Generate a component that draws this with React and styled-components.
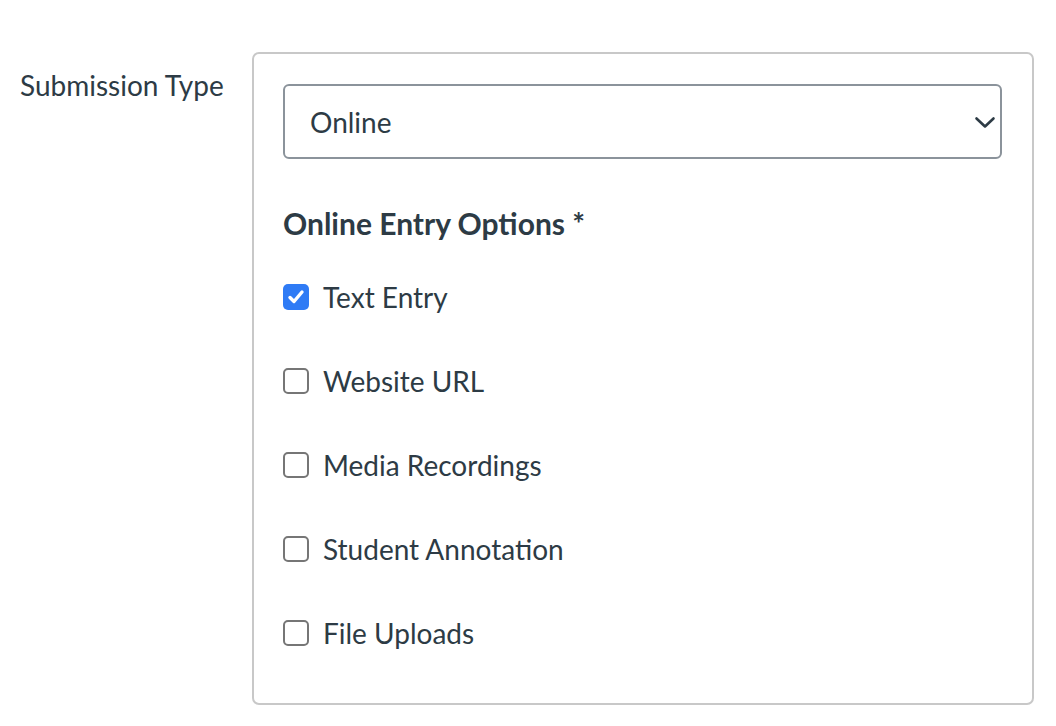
import { useState } from 'react';
import styled, { createGlobalStyle } from 'styled-components';

const GlobalStyle = createGlobalStyle`
    body {
        margin: 0;
        background: #ffffff;
        font-family: Lato, "Noto Sans", sans-serif;
        color: #2d3b45;
    }
`;

const Page = styled.div`
    display: flex;
    padding: 52px 0 0 20px;
`;

const FieldLabel = styled.div`
    width: 232px;
    flex-shrink: 0;
    font-size: 28px;
    line-height: 34px;
    padding-top: 16px;
`;

const Panel = styled.div`
    width: 782px;
    box-sizing: border-box;
    border: 2px solid #c8c8c8;
    border-radius: 7px;
    padding: 30px 30px 28px 29px;
`;

const SelectBox = styled.div`
    height: 75px;
    box-sizing: border-box;
    border: 2px solid #8b939b;
    border-radius: 6px;
    display: flex;
    align-items: center;
    justify-content: space-between;
    padding: 0 2px 0 25px;
    font-size: 28px;
`;

const Heading = styled.div`
    margin-top: 44px;
    font-size: 30px;
    font-weight: 700;
    line-height: 40px;
`;

const Options = styled.div`
    margin-top: 12px;
    display: flex;
    flex-direction: column;
`;

const Row = styled.label`
    height: 84px;
    display: flex;
    align-items: center;
    gap: 14px;
    font-size: 28px;
    cursor: pointer;
`;

const Box = styled.span`
    width: 26px;
    height: 26px;
    box-sizing: border-box;
    border-radius: 5px;
    display: flex;
    align-items: center;
    justify-content: center;
    border: ${(p) => (p.$checked ? 'none' : '2px solid #767676')};
    background: ${(p) => (p.$checked ? '#2f7bf5' : '#ffffff')};
`;

const options = ['Text Entry', 'Website URL', 'Media Recordings', 'Student Annotation', 'File Uploads'];

export default function App() {
    const [checked, setChecked] = useState({ 'Text Entry': true });

    function toggle(name) {
        setChecked((prev) => ({ ...prev, [name]: !prev[name] }));
    }

    return (
        <>
            <GlobalStyle />
            <Page>
                <FieldLabel>Submission Type</FieldLabel>
                <Panel>
                    <SelectBox>
                        <span>Online</span>
                        <svg width="26" height="26" viewBox="0 0 26 26">
                            <path d="M4.5 9.5 L13 17.5 L21.5 9.5" fill="none" stroke="#2d3b45" strokeWidth="2.6" strokeLinecap="round" strokeLinejoin="round" />
                        </svg>
                    </SelectBox>
                    <Heading>Online Entry Options *</Heading>
                    <Options>
                        {options.map((name) => (
                            <Row key={name} onClick={() => toggle(name)}>
                                <Box $checked={!!checked[name]}>
                                    {checked[name] && (
                                        <svg width="20" height="20" viewBox="0 0 20 20">
                                            <path d="M4 10.5 L8 14.5 L16 5" fill="none" stroke="#ffffff" strokeWidth="3.4" strokeLinecap="round" strokeLinejoin="round" />
                                        </svg>
                                    )}
                                </Box>
                                {name}
                            </Row>
                        ))}
                    </Options>
                </Panel>
            </Page>
        </>
    );
}
